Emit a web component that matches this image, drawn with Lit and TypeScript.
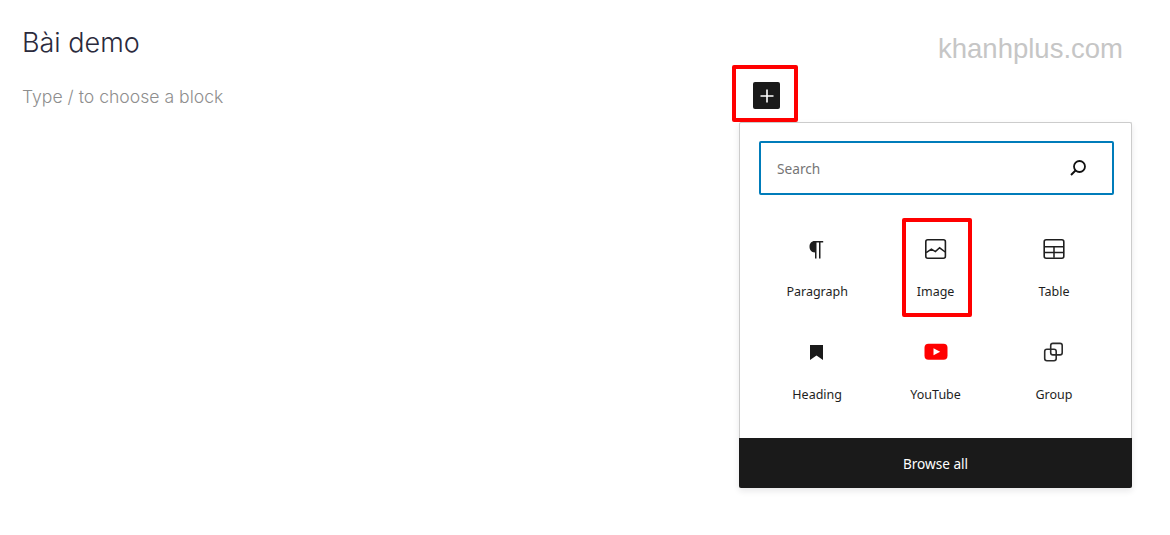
import { LitElement, html, css, svg } from "lit";
import { customElement } from "lit/decorators.js";

const icon = (body: unknown) =>
  html`<svg class="ico" viewBox="0 0 24 24" width="24" height="24">${body}</svg>`;

const blocks = [
  {
    label: "Paragraph",
    marked: false,
    icon: icon(svg`<path fill="#1e1e1e" d="M9.500 15.500v-.2l.5.1v6.100h1.500V5.600h2.500v15.900h1.500V5.600h2.700V4H9.500C6.700 4 4.500 6.200 4.500 9.800c0 3.200 2.200 5.700 5 5.700z"/>`),
  },
  {
    label: "Image",
    marked: true,
    icon: icon(svg`<rect x="1.800" y="2.800" width="19.600" height="18.400" rx="2" fill="none" stroke="#1e1e1e" stroke-width="1.600"/>
      <path d="M2.200 15.600l5.200-3.400 4 2.400 4.200-3.800 5.600 4.200" fill="none" stroke="#1e1e1e" stroke-width="1.500"/>`),
  },
  {
    label: "Table",
    marked: false,
    icon: icon(svg`<rect x="2.200" y="2.800" width="19.600" height="18.400" rx="2" fill="none" stroke="#1e1e1e" stroke-width="1.600"/>
      <path d="M2.500 9.800h19M2.500 15.400h19M12 9.800v11" fill="none" stroke="#1e1e1e" stroke-width="1.500"/>`),
  },
  {
    label: "Heading",
    marked: false,
    icon: icon(svg`<path fill="#1a1a1a" d="M5 5h13v15l-6.500-4.600L5 20z"/>`),
  },
  {
    label: "YouTube",
    marked: false,
    icon: icon(svg`<rect x="0.500" y="3.800" width="23" height="16" rx="4" fill="#f00"/>
      <path fill="#fff" d="M9.500 8.300l6.700 3.500-6.700 3.500z"/>`),
  },
  {
    label: "Group",
    marked: false,
    icon: icon(svg`<rect x="8.700" y="3.400" width="11.500" height="11.500" rx="2.200" fill="none" stroke="#2b2b2b" stroke-width="1.600"/>
      <rect x="2.700" y="9.200" width="11.500" height="11.500" rx="2.200" fill="none" stroke="#2b2b2b" stroke-width="1.600"/>`),
  },
];

@customElement("app-root")
export class AppRoot extends LitElement {
  static styles = css`
    :host {
      display: flex;
      height: 535px;
      background: #fff;
      overflow: hidden;
    }

    .editor {
      flex: 1;
      padding: 23px 0 0 22px;
      font-family: Inter, "Liberation Sans", sans-serif;
      font-weight: 300;
    }

    .title {
      margin: 0;
      font-size: 27px;
      line-height: 40px;
      font-weight: 300;
      color: #2a2a3c;
    }

    .placeholder {
      margin: 14px 0 0;
      font-size: 17.6px;
      line-height: 40px;
      color: #8e8e8e;
    }

    .side {
      width: 393px;
      margin-right: 38px;
      padding-top: 32px;
      font-family: "Noto Sans", "Open Sans", sans-serif;
    }

    .watermark {
      height: 34px;
      padding-right: 9px;
      text-align: right;
      font: 27.5px/34px "Liberation Sans", Arial, sans-serif;
      color: #c6c6c6;
    }

    .plus {
      position: relative;
      display: flex;
      align-items: center;
      justify-content: center;
      width: 27px;
      height: 27px;
      margin: 16px 0 13px 14px;
      background: #1a1a1a;
      border-radius: 2px;
    }

    .ring {
      position: absolute;
      border: 4px solid #f00;
      border-radius: 2px;
      box-sizing: border-box;
    }

    .plus .ring {
      top: -17px;
      bottom: -13px;
      left: -21px;
      right: -18px;
    }

    .popover {
      height: 366px;
      box-sizing: border-box;
      display: flex;
      flex-direction: column;
      border: 1px solid #ccc;
      border-bottom: 0;
      border-radius: 2px;
      background: #fff;
      box-shadow: 0 3px 6px rgba(25, 30, 35, 0.1);
    }

    .search {
      display: flex;
      align-items: center;
      justify-content: space-between;
      box-sizing: border-box;
      height: 54px;
      margin: 18px 17px 0 19px;
      padding: 0 22px 0 16px;
      border: 2px solid #007cba;
      border-radius: 2px;
      font-size: 13.7px;
      color: #757575;
    }

    .grid {
      flex: 1;
      display: grid;
      grid-template-columns: repeat(3, 118.4px);
      grid-auto-rows: 103px;
      margin: 3px 0 0 18px;
    }

    .cell {
      position: relative;
      display: flex;
      flex-direction: column;
      align-items: center;
      padding-top: 39px;
      font-size: 12.5px;
      line-height: 18px;
      color: #1e1e1e;
    }

    .ico {
      display: block;
      margin-bottom: 22px;
    }

    .plus .ico,
    .search .ico {
      margin: 0;
    }

    .cell .ring {
      top: 20px;
      left: 26px;
      width: 70px;
      height: 99px;
    }

    .browse {
      height: 50px;
      margin: 0 -1px;
      display: flex;
      align-items: center;
      justify-content: center;
      background: #1a1a1a;
      border-radius: 0 0 2px 2px;
      color: #fff;
      font-size: 13.6px;
    }
  `;

  render() {
    return html`
      <main class="editor">
        <h1 class="title">Bài demo</h1>
        <p class="placeholder">Type / to choose a block</p>
      </main>
      <aside class="side">
        <div class="watermark">khanhplus.com</div>
        <div class="plus">
          ${icon(svg`<path fill="#fff" d="M18.500 11.200h-5.700V5.500h-1.600v5.700H5.500v1.600h5.700v5.700h1.600v-5.700h5.700z"/>`)}
          <span class="ring"></span>
        </div>
        <section class="popover">
          <div class="search">
            <span>Search</span>
            ${icon(svg`<circle cx="13.500" cy="10.500" r="5.500" fill="none" stroke="#111" stroke-width="1.800"/>
              <path d="M9.500 14.500L5 19" fill="none" stroke="#111" stroke-width="2"/>`)}
          </div>
          <div class="grid">
            ${blocks.map(
              (b) => html`
                <div class="cell">
                  ${b.icon}
                  <span>${b.label}</span>
                  ${b.marked ? html`<span class="ring"></span>` : null}
                </div>
              `
            )}
          </div>
          <div class="browse">Browse all</div>
        </section>
      </aside>
    `;
  }
}
